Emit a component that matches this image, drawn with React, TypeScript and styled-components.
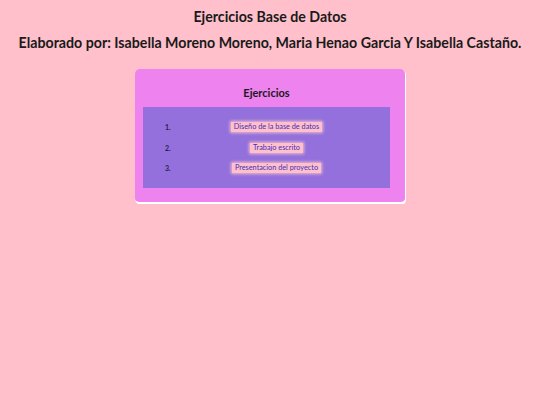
import styled, { createGlobalStyle } from 'styled-components'

const GlobalStyle = createGlobalStyle`
  html, body {
    margin: 0;
    padding: 0;
    background: #ffc0cb;
    font-family: Lato, "DejaVu Sans", sans-serif;
  }
`

const Page = styled.div`
  display: flex;
  flex-direction: column;
  align-items: center;
  padding-top: 8px;
  color: #1a1a1a;
`

const Title = styled.h1`
  font-size: 14.2px;
  font-weight: bold;
  margin: 0;
  line-height: 18px;
`

const Authors = styled.h2`
  font-size: 14.2px;
  font-weight: bold;
  margin: 8px 0 0;
  line-height: 18px;
  white-space: nowrap;
`

const Card = styled.section`
  width: 270px;
  margin-top: 17px;
  padding: 17px 15px 14px 8px;
  box-sizing: border-box;
  background: #ee82ee;
  border-radius: 5px;
  border-bottom: 2px solid #fff;
  box-shadow: 1px 1px 0 #fff;
  display: flex;
  flex-direction: column;
  align-items: center;
`

const CardTitle = styled.h3`
  font-size: 11px;
  font-weight: bold;
  margin: 0 0 7px;
  line-height: 14px;
`

const ListBox = styled.div`
  align-self: stretch;
  background: #9370db;
  padding: 13px 0;
`

const List = styled.ol`
  margin: 0;
  padding: 0 24px 0 22px;
  list-style: none;
  display: flex;
  flex-direction: column;
  gap: 6.5px;
`

const Item = styled.li`
  display: flex;
  align-items: center;
  height: 14px;
`

const Number = styled.span`
  width: 22px;
  font-size: 7px;
  font-weight: bold;
  color: #2a1f4a;
`

const ItemButton = styled.button`
  margin: 0 auto;
  border: none;
  background: #ffc0cb;
  color: #4330b8;
  font-family: inherit;
  font-size: 7.3px;
  line-height: 8px;
  padding: 1px 3px;
  box-shadow: 0 0 3px 1px rgba(255, 200, 210, 0.85);
  cursor: pointer;
`

const items = [
  'Diseño de la base de datos',
  'Trabajo escrito',
  'Presentacion del proyecto',
]

export default function App() {
  return (
    <>
      <GlobalStyle />
      <Page>
        <Title>Ejercicios Base de Datos</Title>
        <Authors>
          Elaborado por: Isabella Moreno Moreno, Maria Henao Garcia Y Isabella
          Castaño.
        </Authors>
        <Card>
          <CardTitle>Ejercicios</CardTitle>
          <ListBox>
            <List>
              {items.map((label, i) => (
                <Item key={label}>
                  <Number>{i + 1}.</Number>
                  <ItemButton>{label}</ItemButton>
                </Item>
              ))}
            </List>
          </ListBox>
        </Card>
      </Page>
    </>
  )
}
